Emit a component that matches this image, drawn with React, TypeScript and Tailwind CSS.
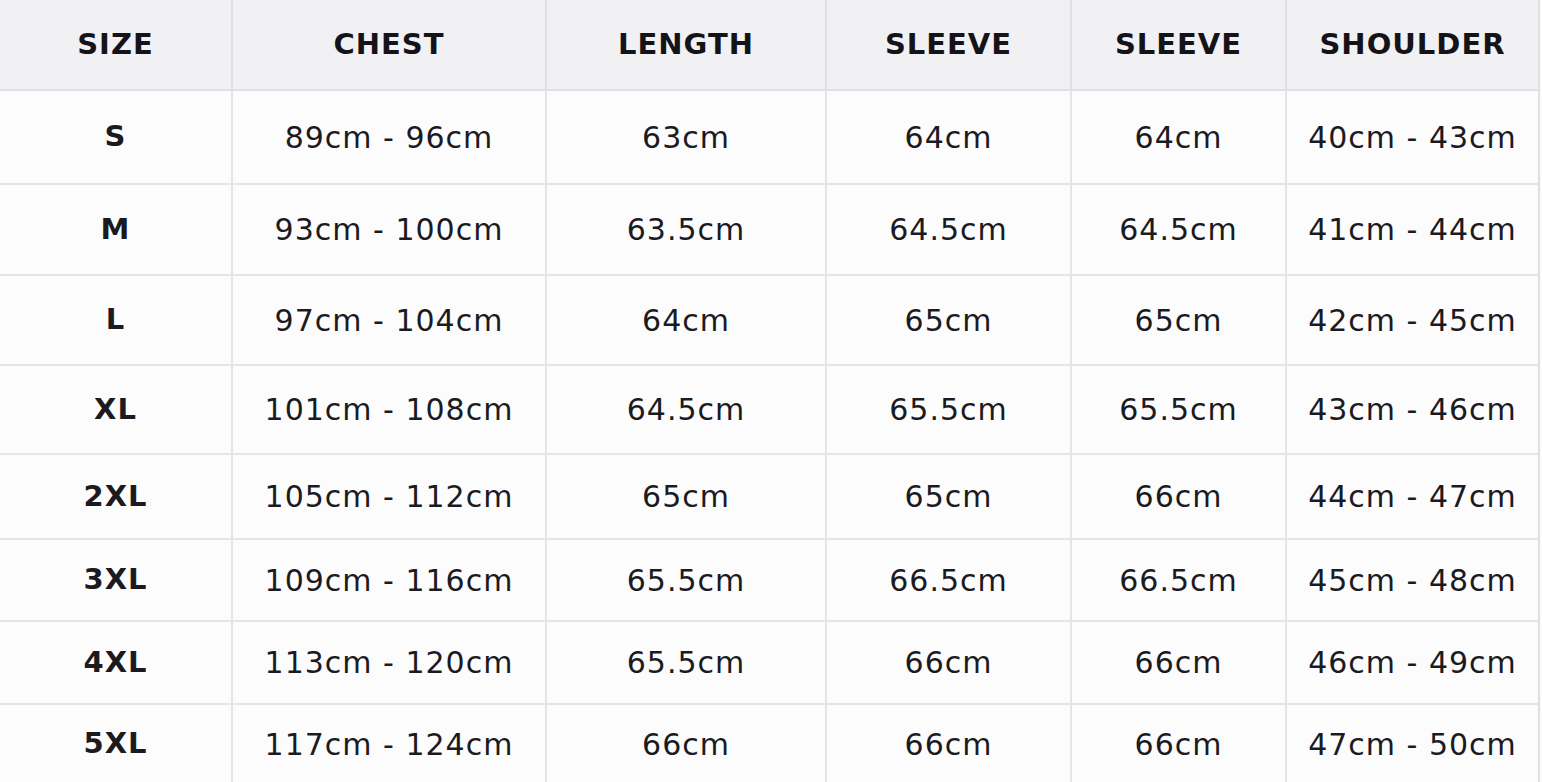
const headers = ['SIZE', 'CHEST', 'LENGTH', 'SLEEVE', 'SLEEVE', 'SHOULDER'];

const rows: { h: string; cells: string[] }[] = [
  { h: 'h-[94px]', cells: ['S', '89cm - 96cm', '63cm', '64cm', '64cm', '40cm - 43cm'] },
  { h: 'h-[91px]', cells: ['M', '93cm - 100cm', '63.5cm', '64.5cm', '64.5cm', '41cm - 44cm'] },
  { h: 'h-[90px]', cells: ['L', '97cm - 104cm', '64cm', '65cm', '65cm', '42cm - 45cm'] },
  { h: 'h-[89px]', cells: ['XL', '101cm - 108cm', '64.5cm', '65.5cm', '65.5cm', '43cm - 46cm'] },
  { h: 'h-[85px]', cells: ['2XL', '105cm - 112cm', '65cm', '65cm', '66cm', '44cm - 47cm'] },
  { h: 'h-[82px]', cells: ['3XL', '109cm - 116cm', '65.5cm', '66.5cm', '66.5cm', '45cm - 48cm'] },
  { h: 'h-[83px]', cells: ['4XL', '113cm - 120cm', '65.5cm', '66cm', '66cm', '46cm - 49cm'] },
  { h: 'h-[80px]', cells: ['5XL', '117cm - 124cm', '66cm', '66cm', '66cm', '47cm - 50cm'] },
];

const cols = 'grid grid-cols-[233px_314px_280px_245px_215px_251px]';

export default function App() {
  return (
    <div className="w-[1542px] h-[782px] overflow-hidden bg-[#fcfcfd] font-['DejaVu_Sans',sans-serif]">
      <div className="w-[1540px] border-r-2 border-[#dfdfe6]">
        <div className={`${cols} h-[91px] bg-[#f1f1f4]`}>
          {headers.map((t, i) => (
            <div
              key={i}
              className="flex items-center justify-center border-r-2 border-b-2 border-[#dfdfe6] last:border-r-0 text-[29px] font-bold tracking-[1px] text-[#131318]"
            >
              {t}
            </div>
          ))}
        </div>
        {rows.map((r, ri) => (
          <div key={ri} className={`${cols} ${r.h}`}>
            {r.cells.map((c, ci) => (
              <div
                key={ci}
                className={`flex items-center justify-center border-r-2 border-b-2 border-[#e4e4ea] last:border-r-0 text-[#1b1b1f] ${
                  ci === 0 ? 'text-[29px] font-bold tracking-[1px]' : 'text-[30px] font-normal tracking-[1px]'
                }`}
              >
                {c}
              </div>
            ))}
          </div>
        ))}
      </div>
    </div>
  );
}
